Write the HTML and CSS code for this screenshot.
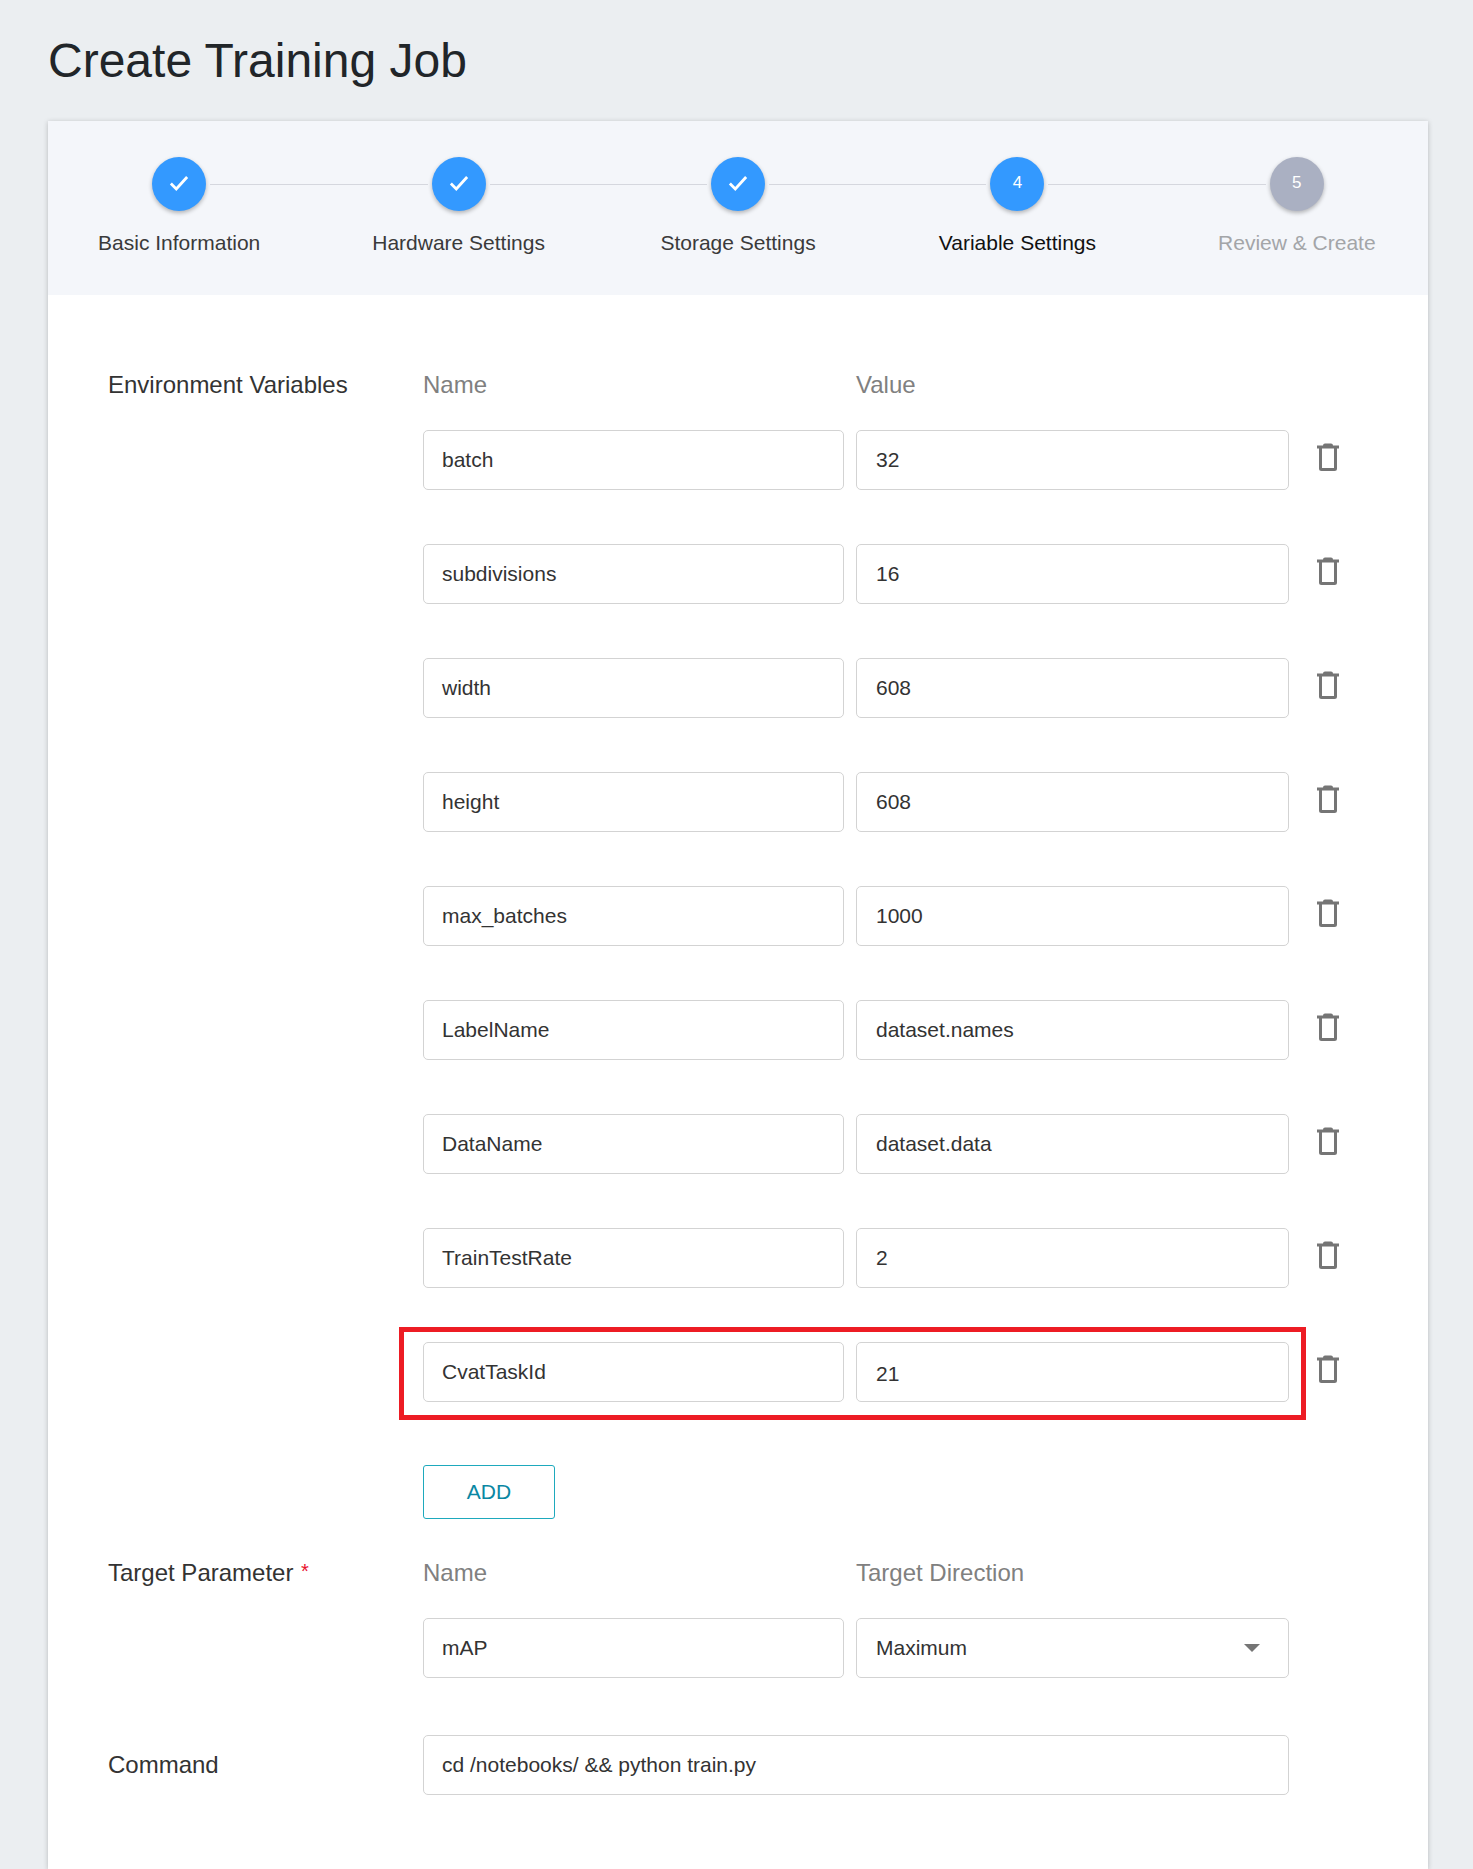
FILE: index.html
```html
<!DOCTYPE html>
<html lang="en">
<head>
<meta charset="utf-8">
<title>Create Training Job</title>
<link rel="stylesheet" href="styles.css">
</head>
<body>
<h1 class="page-title">Create Training Job</h1>
<main class="card">
  <nav class="stepper">
    <div class="step"><span class="step-circle"><svg class="check" viewBox="0 0 24 24"><path d="M4.5 12.5l5 5L19.5 6.5"/></svg></span><span class="step-label">Basic Information</span></div>
    <span class="connector"></span>
    <div class="step"><span class="step-circle"><svg class="check" viewBox="0 0 24 24"><path d="M4.5 12.5l5 5L19.5 6.5"/></svg></span><span class="step-label">Hardware Settings</span></div>
    <span class="connector"></span>
    <div class="step"><span class="step-circle"><svg class="check" viewBox="0 0 24 24"><path d="M4.5 12.5l5 5L19.5 6.5"/></svg></span><span class="step-label">Storage Settings</span></div>
    <span class="connector"></span>
    <div class="step step-active"><span class="step-circle">4</span><span class="step-label">Variable Settings</span></div>
    <span class="connector"></span>
    <div class="step step-disabled"><span class="step-circle">5</span><span class="step-label">Review &amp; Create</span></div>
  </nav>
  <form class="form">
    <section class="section section-env">
      <div class="section-title">Environment Variables</div>
      <div class="fields">
        <div class="col-head">Name</div><div class="col-head">Value</div><div></div>
        <div class="field field-name">batch</div><div class="field">32</div><span class="trash"><svg viewBox="0 0 22 28"><use href="#trash"/></svg></span>
        <div class="field field-name">subdivisions</div><div class="field">16</div><span class="trash"><svg viewBox="0 0 22 28"><use href="#trash"/></svg></span>
        <div class="field field-name">width</div><div class="field">608</div><span class="trash"><svg viewBox="0 0 22 28"><use href="#trash"/></svg></span>
        <div class="field field-name">height</div><div class="field">608</div><span class="trash"><svg viewBox="0 0 22 28"><use href="#trash"/></svg></span>
        <div class="field field-name">max_batches</div><div class="field">1000</div><span class="trash"><svg viewBox="0 0 22 28"><use href="#trash"/></svg></span>
        <div class="field field-name">LabelName</div><div class="field">dataset.names</div><span class="trash"><svg viewBox="0 0 22 28"><use href="#trash"/></svg></span>
        <div class="field field-name">DataName</div><div class="field">dataset.data</div><span class="trash"><svg viewBox="0 0 22 28"><use href="#trash"/></svg></span>
        <div class="field field-name">TrainTestRate</div><div class="field">2</div><span class="trash"><svg viewBox="0 0 22 28"><use href="#trash"/></svg></span>
        <div class="field field-name">CvatTaskId<span class="highlight"></span></div><div class="field field-low">21</div><span class="trash"><svg viewBox="0 0 22 28"><use href="#trash"/></svg></span>
      </div>
    </section>
    <div class="add-row"><button type="button" class="add-btn">ADD</button></div>
    <section class="section section-target">
      <div class="section-title section-title-target">Target Parameter <span class="required">*</span></div>
      <div class="fields">
        <div class="col-head">Name</div><div class="col-head">Target Direction</div><div></div>
        <div class="field field-name">mAP</div>
        <div class="field field-select">Maximum<svg class="caret" viewBox="0 0 16 8"><path d="M0 0h16L8 8z"/></svg></div>
        <div></div>
      </div>
    </section>
    <section class="section section-command">
      <div class="section-title section-title-mid">Command</div>
      <div class="field field-name field-wide">cd /notebooks/ &amp;&amp; python train.py</div>
    </section>
  </form>
</main>
<svg class="sprite" aria-hidden="true"><defs><g id="trash"><path d="M0 2.500h22v3H0zM6 2.500Q6 .5 8 .5h6q2 0 2 2z" fill="#757575"/><path d="M3.500 5v20.500q0 1 1 1h13q1 0 1-1V5" fill="none" stroke="#757575" stroke-width="3"/></g></defs></svg>
</body>
</html>
```
FILE: styles.css
```css
* { box-sizing: border-box; }
html, body { margin: 0; height: 100%; }
body {
  height: 1869px;
  overflow: hidden;
  display: flex;
  flex-direction: column;
  padding: 0 45px 0 48px;
  background: #ebeef1;
  font-family: "Liberation Sans", Arial, sans-serif;
  color: #333;
}
.page-title {
  margin: 0;
  height: 121px;
  padding-top: 33px;
  font-size: 48px;
  line-height: 56px;
  font-weight: 400;
  color: #212529;
}
.card {
  flex: 1;
  background: #fff;
  box-shadow: 0 1px 5px rgba(0, 0, 0, 0.22);
}
.stepper {
  display: flex;
  align-items: flex-start;
  height: 174px;
  padding: 36px 104.2px 0;
  background: #f4f6fa;
}
.step {
  width: 54px;
  flex: none;
  display: flex;
  flex-direction: column;
  align-items: center;
}
.step-circle {
  width: 54px;
  height: 54px;
  border-radius: 50%;
  display: flex;
  align-items: center;
  justify-content: center;
  background: #3399ff;
  color: #fff;
  font-size: 17px;
  padding-bottom: 2px;
  box-shadow: 0 2px 4px rgba(0, 0, 0, 0.28);
}
.step-disabled .step-circle { background: #aab0c2; }
.check { width: 26px; height: 26px; fill: none; stroke: #fff; stroke-width: 2.6; }
.step-label {
  margin-top: 20px;
  font-size: 21px;
  line-height: 24px;
  white-space: nowrap;
  color: #3a3a3a;
}
.step-active .step-label { color: #111; }
.step-disabled .step-label { color: #a3a5a8; }
.connector {
  flex: 1;
  height: 1px;
  margin: 27px 4px 0;
  background: #d5d7de;
}
.form { padding: 78px 0 0 60px; }
.section {
  display: grid;
  grid-template-columns: 315px 1fr;
}
.section-title {
  font-size: 24px;
  line-height: 24px;
  color: #333;
}
.section-title-target { margin-top: -2px; }
.required { margin-left: 1px; color: #e8112d; font-size: 20px; vertical-align: 3px; }
.fields {
  display: grid;
  grid-template-columns: 421px 433px 1fr;
  column-gap: 12px;
  row-gap: 54px;
}
.col-head {
  font-size: 24px;
  line-height: 24px;
  margin-bottom: -21px;
  color: #808080;
}
.field {
  position: relative;
  height: 60px;
  padding: 0 19px;
  display: flex;
  align-items: center;
  border: 1px solid #d3d3d3;
  border-radius: 5px;
  font-size: 21px;
  color: #333;
  background: #fff;
}
.field-name { padding-left: 18px; }
.field-low { padding-top: 4px; }
.field-select { justify-content: space-between; padding-right: 28px; }
.field-wide { width: 866px; }
.caret { width: 16px; height: 8px; fill: #757575; }
.highlight {
  position: absolute;
  left: -25px;
  top: -16px;
  width: 907px;
  height: 93px;
  border: 5px solid #ed1c24;
  pointer-events: none;
}
.trash {
  display: block;
  margin: 13px 0 0 16px;
  width: 22px;
  height: 28px;
}
.trash svg { display: block; width: 22px; height: 28px; }
.sprite { position: absolute; width: 0; height: 0; }
.add-row { padding: 63px 0 42px 315px; }
.add-btn {
  display: block;
  width: 132px;
  height: 54px;
  padding: 0;
  border: 1px solid #1ea9bd;
  border-radius: 3px;
  background: #fff;
  color: #0a87a3;
  font: 400 21px "Liberation Sans", Arial, sans-serif;
}
.section-command { margin-top: 57px; align-items: center; }
.section-title-mid { line-height: 60px; }
```
